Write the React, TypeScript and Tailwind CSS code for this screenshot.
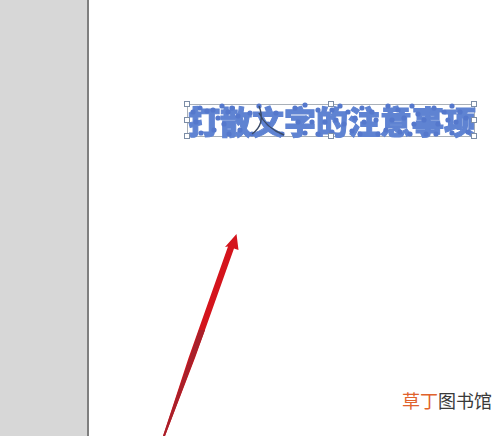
const DOTS: [number, number][] = [
  [193,112],[200,108],[207,111],[196,122],[201,133],[213,110],[218,118],[214,130],[222,106],[228,112],[224,124],[232,108],[238,116],[229,134],[240,130],
  [259,106],[250,113],[276,113],[268,124],[252,134],[282,134],[295,108],[305,105],[318,110],[298,122],[312,122],[325,122],[305,133],[318,134],
  [332,110],[340,106],[336,120],[344,124],[332,132],[348,112],[355,118],[352,131],[362,108],[372,112],[364,122],[376,120],[360,134],[378,134],
  [388,106],[398,110],[392,120],[404,118],[386,130],[400,132],[412,106],[418,114],[414,124],[424,120],[410,134],[426,134],
  [434,108],[444,112],[438,124],[448,120],[436,134],[452,106],[460,112],[456,122],[466,118],[452,133],[468,132],
];

const HANDLES: [number, number][] = [
  [187,104],[331,104],[474,104],[187,120],[474,120],[187,136],[331,136],[474,136],
];

export default function App() {
  return (
    <div className="relative flex h-[436px] w-[502px] overflow-hidden bg-white">
      <aside className="h-full w-[87px] shrink-0 bg-[#d7d7d7]" />
      <div className="h-full w-[2px] shrink-0 bg-[#7f7f7f]" />
      <main className="flex-1 bg-white pl-[98px] pt-[104px]">
        <div className="h-[33px] w-[288px] border border-[#a9b0b8] font-['Noto_Sans_CJK_SC',sans-serif] text-[32px] font-black leading-[30px] whitespace-nowrap text-[#5f83d2] [-webkit-text-stroke:1px_#5f83d2] blur-[0.4px]">
          打散文字的注意事项
        </div>
      </main>

      <svg className="absolute inset-0 h-full w-full blur-[0.4px]" viewBox="0 0 502 436" fill="none">
        {DOTS.map(([x, y], i) => (
          <circle key={i} cx={x} cy={y} r="2.6" fill="#5578cc" />
        ))}
        <path d="M259 106 Q266 124 252 134 M259 113 Q266 128 284 135" stroke="#3a4a66" strokeWidth="1.4" />
        {HANDLES.map(([x, y], i) => (
          <rect key={i} x={x - 2.5} y={y - 2.5} width="5" height="5" fill="#fff" stroke="#7c8da6" strokeWidth="1" />
        ))}
        <path d="M236.5 234 L238.5 250 L234 248.5 L195 358 L165 436 L163 436 L188.5 358 L228 246.5 L225 247 Z" fill="#d4141c" />
        <path d="M163 436 L165 436 L205 330 L199 330 Z" fill="#a8202a" />
      </svg>

      <div className="absolute left-[402px] top-[389px] flex font-['Noto_Sans_CJK_SC',sans-serif] text-[18px] leading-[22px] whitespace-nowrap">
        <span className="text-[#e0622c]">草丁</span>
        <span className="text-[#3a3a3a]">图书馆</span>
      </div>
    </div>
  );
}
